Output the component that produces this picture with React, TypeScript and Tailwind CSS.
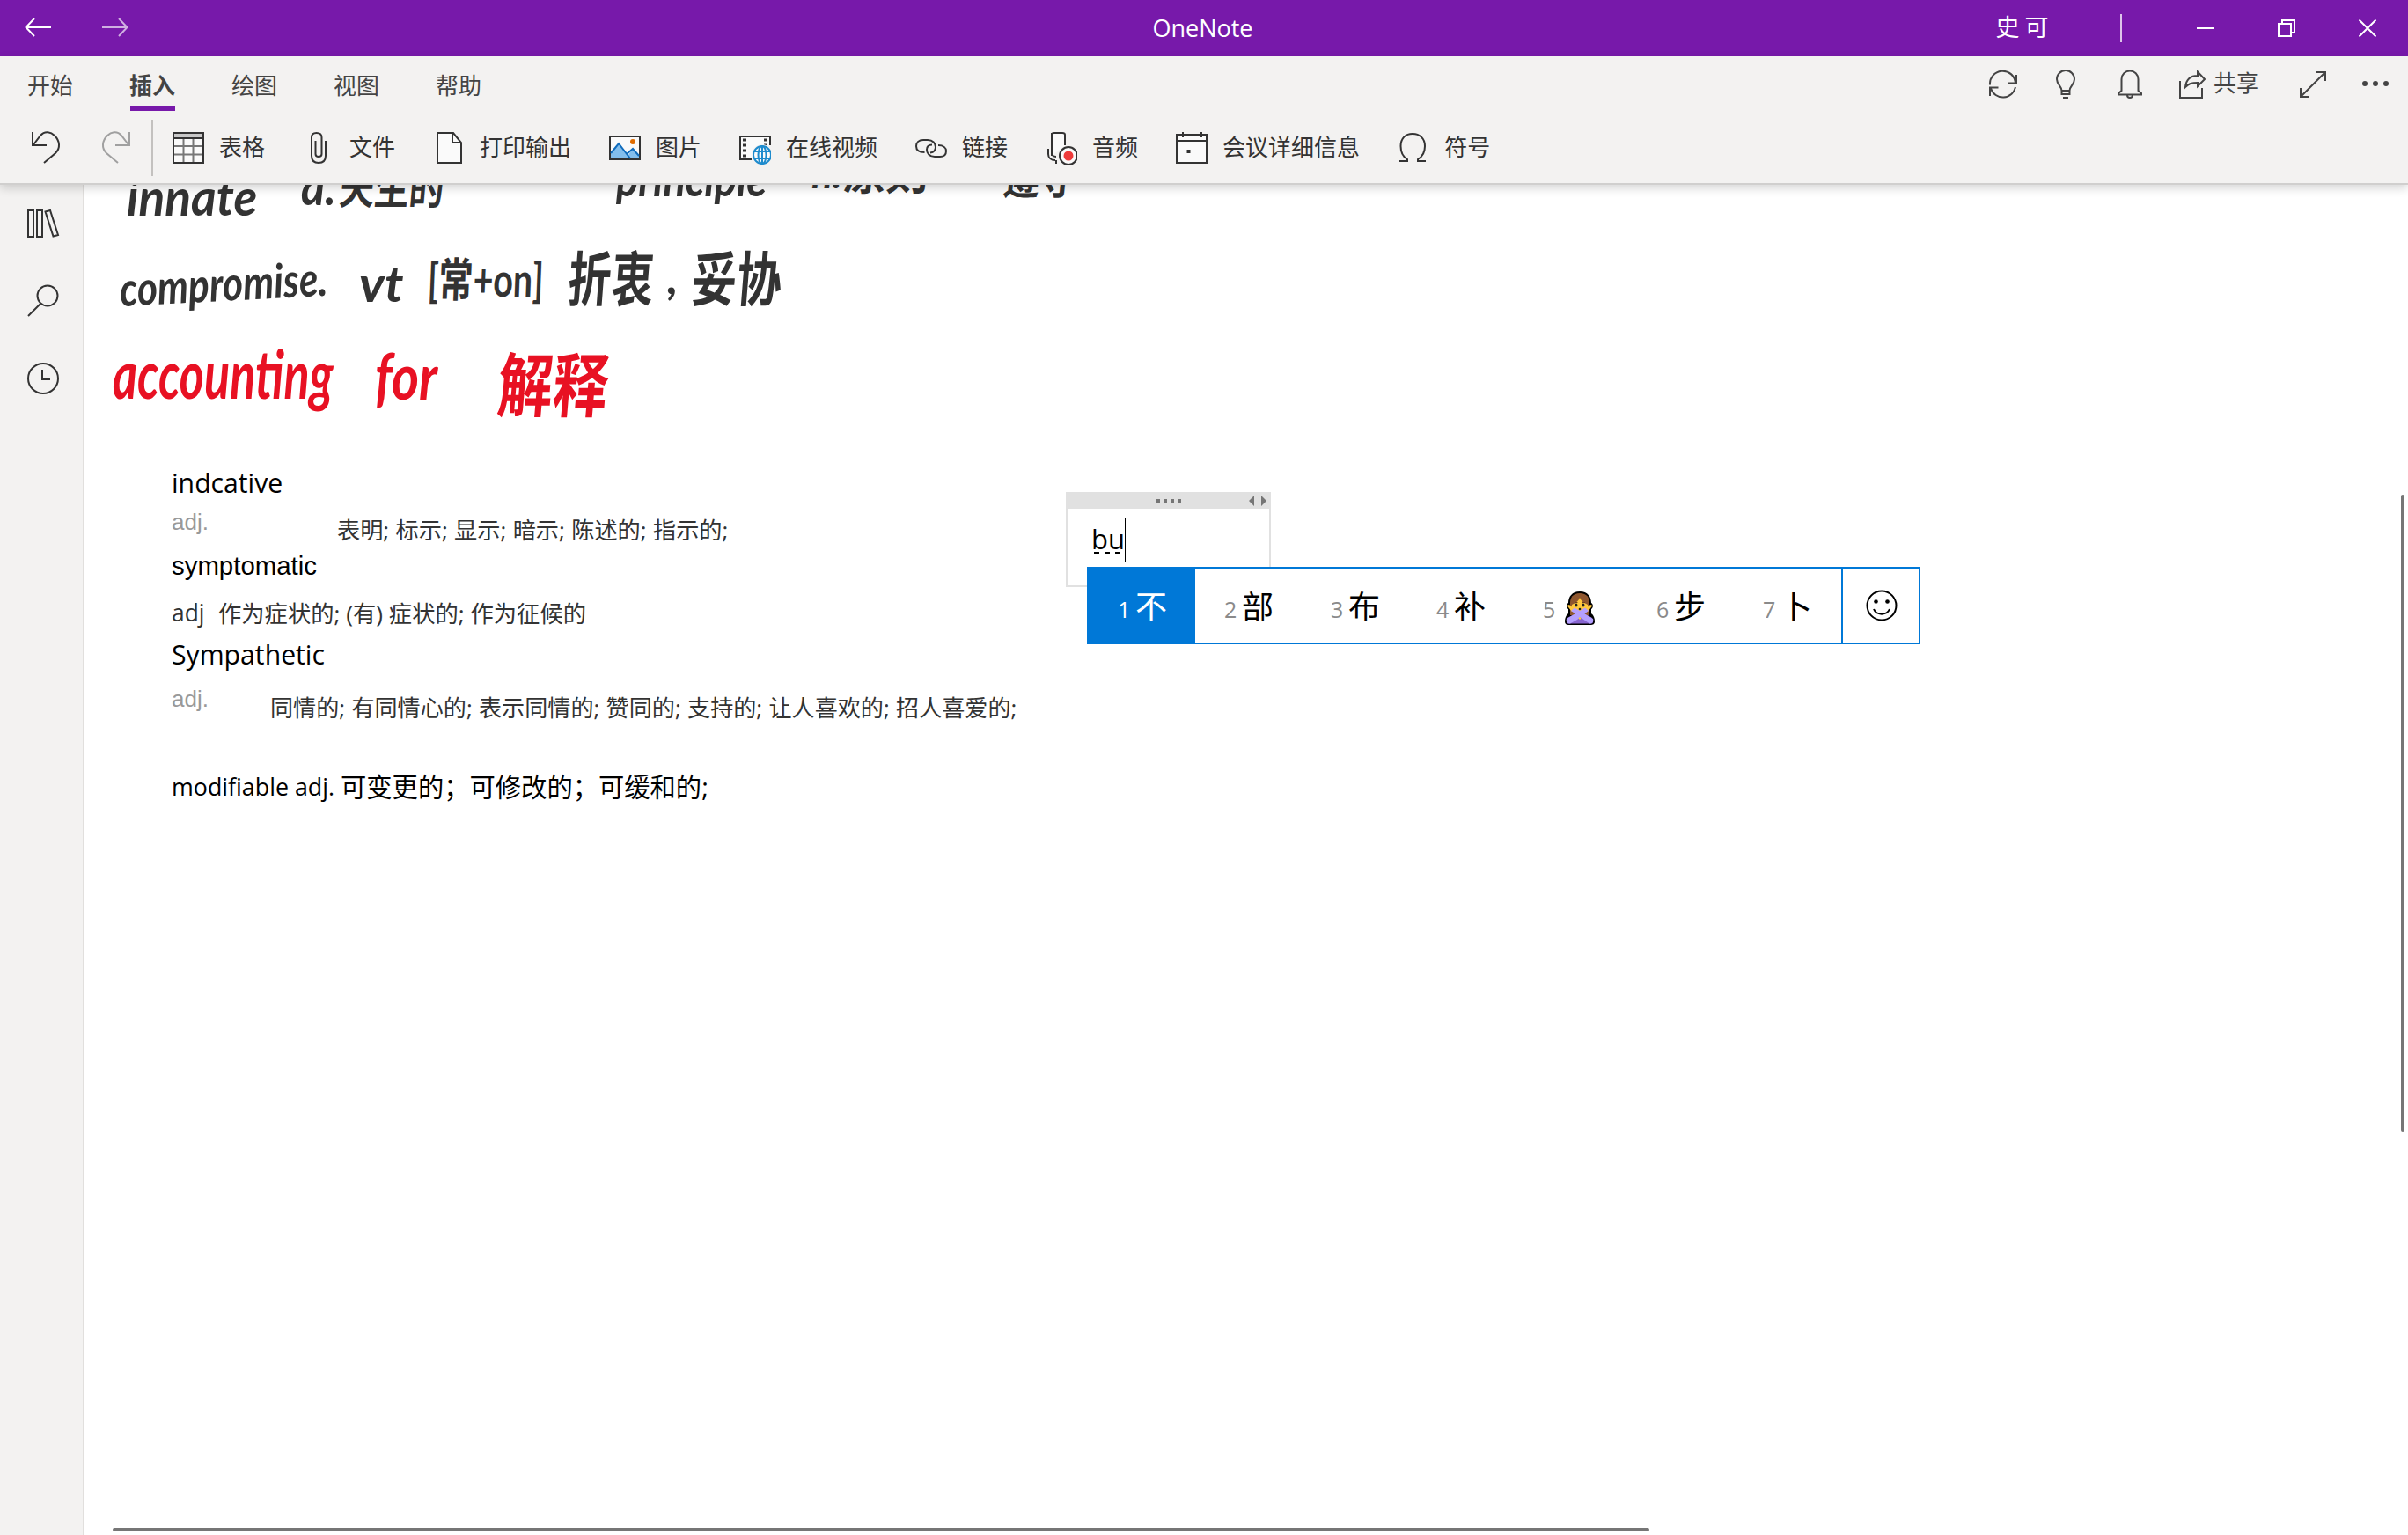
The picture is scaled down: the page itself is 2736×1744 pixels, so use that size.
import React from "react";

const UI = "font-['Open_Sans','Noto_Sans_CJK_SC',sans-serif]";

type IconProps = { w?: number; h?: number; children: React.ReactNode; className?: string; sw?: number };

function Icon({ w = 36, h = 36, children, className = "", sw = 2 }: IconProps) {
  return (
    <svg
      width={w}
      height={h}
      viewBox={`0 0 ${w} ${h}`}
      fill="none"
      stroke="currentColor"
      strokeWidth={sw}
      className={`shrink-0 ${className}`}
    >
      {children}
    </svg>
  );
}

function TitleBar() {
  return (
    <div className="relative flex h-16 items-center bg-[#7719aa] text-white">
      <Icon w={32} h={40} className="ml-7">
        <path d="M1 19H30M11 9L1.5 19L11 29" />
      </Icon>
      <Icon w={32} h={40} className="ml-[56px] opacity-65">
        <path d="M0 19H29M19 9L28.5 19L19 29" />
      </Icon>
      <div className="absolute inset-x-0 pr-[3px] text-center text-[27px] leading-[62px]">OneNote</div>
      <div className="ml-auto flex items-center">
        <span className="pb-[2px] text-[27px] leading-10 tracking-[-0.5px]">史 可</span>
        <span className="ml-[82px] h-8 w-0.5 bg-white/75" />
        <Icon w={20} h={20} className="ml-[85px]">
          <path d="M0 10H20" />
        </Icon>
        <Icon w={20} h={20} className="ml-[72px]">
          <path d="M1 5H15V19H1ZM5 5V1H19V15H15" />
        </Icon>
        <Icon w={20} h={20} className="ml-[72px] mr-9">
          <path d="M0.5 0.5L19.5 19.5M19.5 0.5L0.5 19.5" />
        </Icon>
      </div>
    </div>
  );
}

const tabs = ["开始", "插入", "绘图", "视图", "帮助"];

function TabRow() {
  return (
    <div className="flex h-[66px] items-start pl-[31px] text-[26px] leading-[40px] text-[#444]">
      <div className="flex gap-16 pt-[13px]">
        {tabs.map((t) => (
          <div key={t} className="flex w-[52px] flex-col">
            <span className={t === "插入" ? "font-bold" : ""}>{t}</span>
            {t === "插入" && <span className="ml-px mt-[3px] h-1.5 bg-[#7719aa]" />}
          </div>
        ))}
      </div>
      <div className="ml-auto flex h-16 items-center">
        <Icon w={34} h={34}>
          <path d="M2 17.500A14.500 14.500 0 0 1 31 15M32 6V15.500H22.500M31 20A14.500 14.500 0 0 1 3 21.500M2 30V20.500H11.500" />
        </Icon>
        <Icon w={24} h={34} className="ml-[42px]">
          <path d="M7.5 24C7.5 19 2 17 2 11A10 10 0 0 1 22 11C22 17 16.500 19 16.500 24V28H7.500ZM7.500 24H16.500M9 32H15" />
        </Icon>
        <Icon w={30} h={34} className="ml-[46px]">
          <path d="M5.500 24V11A9.500 9.500 0 0 1 24.500 11V24L28 27V28.500H2V27ZM12 29A3 3 0 0 0 18 29" />
        </Icon>
        <Icon w={32} h={34} className="ml-[40px]">
          <path d="M2 13V32H27V21M8 20C9 11 14 7 22 7V2.500L30 11L22 19V15C15 15 12 16 8 20Z" />
        </Icon>
        <span className="ml-[8px] pb-1 text-[26px]">共享</span>
        <Icon w={32} h={32} className="ml-[45px]">
          <path d="M2 30L30 2M20 2H30V12M2 20V30H12" />
        </Icon>
        <Icon w={32} h={10} className="ml-[39px] mr-[21px]">
          <g fill="currentColor" stroke="none">
            <circle cx="4" cy="4" r="3" />
            <circle cx="16" cy="4" r="3" />
            <circle cx="28" cy="4" r="3" />
          </g>
        </Icon>
      </div>
    </div>
  );
}

function Command({ label, children }: { label: string; children: React.ReactNode }) {
  return (
    <div className="flex items-center gap-[17px] pr-px">
      <Icon w={36} h={40}>
        {children}
      </Icon>
      <span className="pb-[2px]">{label}</span>
    </div>
  );
}

function Toolbar() {
  return (
    <div className="flex h-[76px] items-center text-[26px] leading-10 text-[#333]">
      <Icon w={34} h={40} className="ml-9">
        <path d="M1 2V17H17M1.500 17L10 6C15 0 22 2 26 6C32 12 33 20 27 26L14 37" />
      </Icon>
      <Icon w={34} h={40} className="ml-[45px] text-[#a0a0a0]">
        <path d="M32 2V17H16M31.500 17L23 6C18 0 11 2 7 6C1 12 0 20 6 26L19 37" />
      </Icon>
      <span className="ml-[23px] h-16 w-0.5 bg-[#c3c1bf]" />
      <div className="ml-[22px] flex gap-[42px]">
        <Command label="表格">
          <path d="M1 3H35V37H1Z" fill="#fafafa" />
          <path d="M2 4H34V9H2Z" fill="#c8c8c8" stroke="none" />
          <path d="M1 9H35" />
          <path d="M12.500 10V36M23.500 10V36M2 18H34M2 27.500H34" stroke="#777" />
        </Command>
        <Command label="文件">
          <path d="M26 12V29C26 34 23 37 18 37C13 37 10 34 10 29V8C10 4.500 12 3 15.500 3C19 3 21.500 4.500 21.500 8V27C21.500 29 20.500 30 18 30C16 30 14.500 29 14.500 27V12" />
        </Command>
        <Command label="打印输出">
          <path d="M5 3H23L32 14V37H5Z" fill="#fafafa" />
          <path d="M22 3V14H32" />
        </Command>
        <Command label="图片">
          <path d="M1 7H35V33H1Z" fill="#fafafa" />
          <path d="M2 27L11 15L22 28L27 21L34 29V32H2Z" fill="#83beec" stroke="none" />
          <path d="M2 26L11 15L24 32M20 27L27 21L34 29" stroke="#0f6cbd" />
          <circle cx="27" cy="13" r="3" fill="#e06c00" stroke="none" />
        </Command>
        <Command label="在线视频">
          <path d="M14 33H1V7H35V17" fill="#fafafa" />
          <path d="M4 11H8M4 17H8M4 23H8M4 29H8M28 11H32M28 17H32" strokeWidth="3" />
          <circle cx="26" cy="28" r="12" fill="#f3f2f1" stroke="none" />
          <g stroke="#1e8bcd">
            <circle cx="26" cy="28" r="10" fill="#fafafa" />
            <ellipse cx="26" cy="28" rx="4.500" ry="10" />
            <path d="M26 18V38M17 24H35M17 32H35" />
          </g>
        </Command>
        <Command label="链接">
          <path d="M10.500 25C4 25 1 22 1 18C1 14 4 11 9 11H14C20 11 23 15 23 19C23 23 20.500 25 17 25.500M26 17C32 17 35 20 35 23.500C35 28 32 30 28 30H22C16 30 13 26 13 22C13 18.500 15.500 16.500 19 16.500" />
        </Command>
        <Command label="音频">
          <path d="M7 29V5C7 3 8 3 10 3H19C21 3 22 4 22 5V17" fill="#fafafa" />
          <path d="M7 3V26C7 28 9 30 12 30M3 21V27C3 31 6 34 11 34M12 34V38" />
          <circle cx="26" cy="29" r="10" fill="#fafafa" />
          <circle cx="26" cy="29" r="5.500" fill="#ee3a3a" stroke="none" />
        </Command>
        <Command label="会议详细信息">
          <path d="M1 5H35V37H1Z" fill="#fafafa" />
          <path d="M1 12H35M8 2V8M29 2V8" />
          <rect x="12.500" y="22" width="4" height="4" fill="currentColor" stroke="none" />
        </Command>
        <Command label="符号">
          <path d="M2 35H11V33C6 30 3.500 25 3.500 18C3.500 9 9 4 17 4C25 4 31 9 31 18C31 25 28 30 23 33V35H32" />
        </Command>
      </div>
    </div>
  );
}

function Sidebar() {
  return (
    <div className="flex w-24 flex-col items-center border-r-2 border-[#e1dfdd] bg-[#f3f2f1] pl-[3px] pt-[26px] text-[#333]">
      <Icon w={38} h={36}>
        <path d="M2 3H8V33H2ZM12 3H18V33H12ZM21.500 4.500L27 3L36 31L30.500 32.500Z" />
      </Icon>
      <Icon w={38} h={40} className="mt-[50px]">
        <circle cx="24" cy="14" r="11.500" />
        <path d="M16 23L2 37" />
      </Icon>
      <Icon w={38} h={38} className="mt-[49px]">
        <circle cx="19" cy="19" r="17" />
        <path d="M18 9V20H27" />
      </Icon>
    </div>
  );
}

/* Handwritten notes at the top of the page. */
function InkNotes() {
  return (
    <div className="whitespace-pre font-['Lato','Noto_Sans_CJK_SC',sans-serif] font-bold text-[#333] [&>span]:absolute [&>span]:origin-left [&>span]:leading-[60px]">
      <span className="left-[48px] top-[-17px] scale-x-95 text-[58px] italic">innate</span>
      <span className="left-[246px] top-[-29px] scale-x-90 text-[58px] italic">a.</span>
      <span className="left-[290px] top-[-27px] -skew-x-6 scale-x-90 scale-y-110 text-[44px]">天生的</span>
      <span className="left-[604px] top-[-37px] scale-x-[0.87] text-[54px] italic">principle</span>
      <span className="left-[826px] top-[-43px] text-[44px] italic">n.</span>
      <span className="left-[864px] top-[-42px] -skew-x-6 text-[48px]">原则</span>
      <span className="left-[1044px] top-[-36px] -skew-x-6 scale-x-90 text-[46px]">遵守</span>
      <span className="left-[40px] top-[88px] -rotate-3 scale-x-[0.82] text-[54px] italic">compromise.</span>
      <span className="left-[312px] top-[82px] scale-x-105 text-[56px] italic">vt</span>
      <span className="left-[390px] top-[77px] -skew-x-3 scale-x-[0.82] scale-y-110 text-[48px]">[常+on]</span>
      <span className="left-[550px] top-[77px] -skew-x-6 scale-x-90 scale-y-125 text-[54px]">折衷</span>
      <span className="left-[662px] top-[74px] text-[54px] italic">,</span>
      <span className="left-[690px] top-[77px] -skew-x-6 scale-x-95 scale-y-125 text-[54px]">妥协</span>
      <span className="left-[32px] top-[183px] scale-x-[0.77] scale-y-110 text-[70px] italic text-[#e81123]">accounting</span>
      <span className="left-[330px] top-[186px] scale-x-[0.9] scale-y-110 text-[66px] italic text-[#e81123]">for</span>
      <span className="left-[470px] top-[197px] -skew-x-6 scale-x-95 scale-y-120 text-[66px] text-[#e81123]">解释</span>
    </div>
  );
}

function TypedNotes() {
  return (
    <div className="whitespace-pre text-black [&>span]:absolute [&>span]:leading-10">
      <span className="left-[99px] top-[319px] text-[30.2px]">indcative</span>
      <span className="left-[99px] top-[363px] font-['Liberation_Sans',sans-serif] text-[26px] text-[#999]">adj.</span>
      <span className="left-[287px] top-[372px] text-[26.2px] text-[#333] [word-spacing:0.5px]">表明; 标示; 显示; 暗示; 陈述的; 指示的;</span>
      <span className="left-[99px] top-[413px] font-['Liberation_Sans',sans-serif] text-[29.4px]">symptomatic</span>
      <span className="left-[99px] top-[466px] text-[26.4px] text-[#333]">adj</span>
      <span className="left-[152px] top-[467px] text-[26.3px] text-[#333]">作为症状的; (有) 症状的; 作为征候的</span>
      <span className="left-[99px] top-[514px] text-[30.2px]">Sympathetic</span>
      <span className="left-[99px] top-[564px] font-['Liberation_Sans',sans-serif] text-[26px] text-[#999]">adj.</span>
      <span className="left-[211px] top-[574px] text-[26.1px] text-[#333] [word-spacing:0.5px]">
        同情的; 有同情心的; 表示同情的; 赞同的; 支持的; 让人喜欢的; 招人喜爱的;
      </span>
      <span className="left-[99px] top-[664px] text-[26.8px]">modifiable adj.</span>
      <span className="left-[291px] top-[664px] text-[29.3px]">可变更的；可修改的；可缓和的;</span>
    </div>
  );
}

function NoteContainer() {
  return (
    <div className="absolute left-[1115px] top-[349px] h-[108px] w-[233px] border-2 border-t-0 border-[#e1e1e1] bg-white">
      <div className="relative flex h-[19px] items-center justify-center gap-1 bg-[#e1e1e1]">
        <span className="size-1 bg-[#767676]" />
        <span className="size-1 bg-[#767676]" />
        <span className="size-1 bg-[#767676]" />
        <span className="size-1 bg-[#767676]" />
        <svg width="20" height="12" viewBox="0 0 20 12" className="absolute right-[3px]" fill="#767676">
          <path d="M6 0V12L0 6ZM14 0V12L20 6Z" />
        </svg>
      </div>
      <div className="flex pl-[27px] pt-[10px]">
        <div className="flex w-9 flex-col">
          <span className="h-[39px] text-[31px] leading-[48px]">bu</span>
          <span className="ml-[3px] flex gap-1.5">
            <span className="h-0.5 w-1.5 bg-black" />
            <span className="h-0.5 w-1.5 bg-black" />
            <span className="h-0.5 w-1.5 bg-black" />
          </span>
        </div>
        <span className="ml-[2px] h-[50px] w-px bg-black" />
      </div>
    </div>
  );
}

function GestureEmoji() {
  return (
    <svg width="36" height="40" viewBox="0 0 36 40">
      <path
        d="M18 1C9 1 5 7 5 14C2 16 3 20 5 21V26C2 28 1 32 1 35C1 38 3 39 6 39H30C33 39 35 38 35 35C35 32 34 28 31 26V21C33 20 34 16 31 14C31 7 27 1 18 1Z"
        fill="#000"
      />
      <path d="M18 3C10 3 7 8 7 14V28H29V14C29 8 26 3 18 3Z" fill="#8e562e" />
      <path d="M9 16C14 14 17 11 18 8C19 11 22 14 27 16C28 22 24 26 18 26C12 26 8 22 9 16Z" fill="#ffc83d" />
      <path d="M3.500 17L6 16L12 21L9 24ZM32.500 17L30 16L24 21L27 24Z" fill="#ffc83d" />
      <path d="M12 13.500H15.500M20.500 13.500H24" stroke="#6d4020" strokeWidth="1" />
      <ellipse cx="14" cy="16.500" rx="1.400" ry="2" fill="#222" />
      <ellipse cx="22" cy="16.500" rx="1.400" ry="2" fill="#222" />
      <circle cx="18" cy="21" r="1.300" fill="#222" />
      <path d="M18 27C9 27 3 30 3 35C3 37 4 37.500 6 37.500H30C32 37.500 33 37 33 35C33 30 27 27 18 27Z" fill="#8764cf" />
      <path d="M8 23L12 19.500L33 32C34 36 32 37.500 29 37.500Z" fill="#b4a0ff" />
      <path d="M28 23L24 19.500L3 32C2 36 4 37.500 7 37.500L15 33Z" fill="#b4a0ff" />
      <circle cx="18" cy="31.500" r="1.200" fill="#ffc83d" />
    </svg>
  );
}

const candidates: { n: string; c: React.ReactNode; w: string }[] = [
  { n: "1", c: "不", w: "w-[121px] bg-[#0078d7] text-white" },
  { n: "2", c: "部", w: "w-[121px] text-black" },
  { n: "3", c: "布", w: "w-[120px] text-black" },
  { n: "4", c: "补", w: "w-[121px] text-black" },
  { n: "5", c: <GestureEmoji />, w: "w-[129px] text-black" },
  { n: "6", c: "步", w: "w-[121px] text-black" },
  { n: "7", c: "卜", w: "w-[122px] text-black" },
];

function CandidateBar() {
  return (
    <div className="absolute left-[1139px] top-[434px] flex h-[88px] w-[947px] border-2 border-[#0078d7] bg-white">
      {candidates.map((k) => (
        <div key={k.n} className={`flex items-center pl-[33px] ${k.w}`}>
          <span className={`mt-2 w-[15px] text-[25px] leading-9 ${k.n === "1" ? "" : "text-[#8a8a8a]"}`}>{k.n}</span>
          <span className={`text-[36px] leading-[50px] ${k.n === "5" ? "ml-[9px] mt-[6px]" : "ml-[5px] mt-[4px]"}`}>{k.c}</span>
        </div>
      ))}
      <div className="flex flex-1 items-center justify-center border-l-2 border-[#0078d7] pl-px">
        <Icon w={36} h={36}>
          <circle cx="18" cy="18" r="16.500" />
          <circle cx="11.500" cy="13.500" r="2.300" fill="currentColor" stroke="none" />
          <circle cx="24.500" cy="13.500" r="2.300" fill="currentColor" stroke="none" />
          <path d="M9 22C12 29.500 24 29.500 27 22" />
        </Icon>
      </div>
    </div>
  );
}

export default function App() {
  return (
    <div className={`flex h-[1744px] w-[2736px] flex-col overflow-hidden bg-white ${UI}`}>
      <TitleBar />
      <div className="relative z-10 h-[146px] border-b-2 border-[#d0cfce] bg-[#f3f2f1] shadow-[0_4px_10px_rgba(0,0,0,0.16)]">
        <TabRow />
        <Toolbar />
      </div>
      <div className="flex flex-1">
        <Sidebar />
        <main className="relative flex-1 overflow-hidden bg-white">
          <InkNotes />
          <TypedNotes />
          <NoteContainer />
          <CandidateBar />
          <div className="absolute right-1 top-[352px] h-[724px] w-1 rounded-full bg-[#767676]" />
          <div className="absolute bottom-1 left-8 h-1 w-[1746px] rounded-full bg-[#767676]" />
        </main>
      </div>
    </div>
  );
}
